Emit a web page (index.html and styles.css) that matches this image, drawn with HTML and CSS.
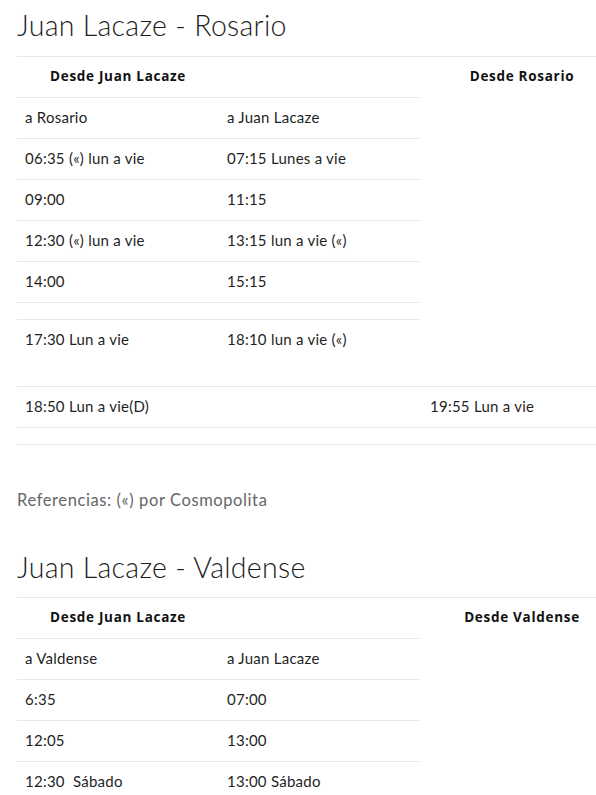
FILE: index.html
```html
<!DOCTYPE html>
<html lang="es">
<head>
<meta charset="utf-8">
<link rel="stylesheet" href="styles.css">
</head>
<body>
<div class="page">
  <h2 class="route-title">Juan Lacaze - Rosario</h2>
  <table class="schedule">
    <colgroup><col class="c1"><col class="c2"><col class="c3"></colgroup>
    <tr class="head">
      <th class="h-from">Desde Juan Lacaze</th>
      <th></th>
      <th class="h-to">Desde Rosario</th>
    </tr>
    <tr class="part"><td>a Rosario</td><td>a Juan Lacaze</td><td class="free"></td></tr>
    <tr class="part"><td>06:35 («) lun a vie</td><td>07:15 Lunes a vie</td><td class="free"></td></tr>
    <tr class="part"><td>09:00</td><td>11:15</td><td class="free"></td></tr>
    <tr class="part"><td>12:30 («) lun a vie</td><td>13:15 lun a vie («)</td><td class="free"></td></tr>
    <tr class="part"><td>14:00</td><td>15:15</td><td class="free"></td></tr>
    <tr class="part empty"><td></td><td></td><td class="free"></td></tr>
    <tr class="part tall"><td>17:30 Lun a vie</td><td>18:10 lun a vie («)</td><td class="free"></td></tr>
    <tr class="full"><td>18:50 Lun a vie(D)</td><td></td><td class="c3-text">19:55 Lun a vie</td></tr>
    <tr class="full empty last"><td></td><td></td><td></td></tr>
  </table>
  <p class="refs">Referencias: («) por Cosmopolita</p>

  <h2 class="route-title second">Juan Lacaze - Valdense</h2>
  <table class="schedule">
    <colgroup><col class="c1"><col class="c2"><col class="c3"></colgroup>
    <tr class="head">
      <th class="h-from">Desde Juan Lacaze</th>
      <th></th>
      <th class="h-to">Desde Valdense</th>
    </tr>
    <tr class="part"><td>a Valdense</td><td>a Juan Lacaze</td><td class="free"></td></tr>
    <tr class="part"><td>6:35</td><td>07:00</td><td class="free"></td></tr>
    <tr class="part"><td>12:05</td><td>13:00</td><td class="free"></td></tr>
    <tr class="part"><td>12:30&nbsp; Sábado</td><td>13:00 Sábado</td><td class="free"></td></tr>
  </table>
</div>
</body>
</html>
```

FILE: styles.css
```css
html, body {
  margin: 0;
  padding: 0;
  background: #fff;
  overflow: hidden;
}
.page {
  padding: 0 0 0 17px;
  font-family: "Lato", "Noto Sans", sans-serif;
  color: #1f1f1f;
}
.route-title {
  margin: 0;
  padding-top: 7px;
  height: 49px;
  font-size: 28.5px;
  line-height: 36px;
  font-weight: 300;
  letter-spacing: 0.3px;
  color: #1c1c1c;
}
.route-title.second {
  padding-top: 3px;
  height: 48px;
}
.schedule {
  width: 579px;
  border-collapse: collapse;
  table-layout: fixed;
  font-size: 15px;
  letter-spacing: 0.25px;
}
.c1 { width: 202px; }
.c2 { width: 201px; }
.c3 { width: 176px; }
.schedule th,
.schedule td {
  padding: 9px 8px 11px;
  line-height: 20px;
  vertical-align: top;
  text-align: left;
  border-top: 1px solid #e8e8e8;
}
.schedule th {
  font-family: "Open Sans", "Lato", sans-serif;
  font-size: 13.5px;
  font-weight: 700;
  letter-spacing: 0.7px;
  color: #111;
}
.schedule th.h-from { text-align: center; }
.schedule th.h-to {
  text-align: center;
  padding: 9px 0 11px 28px;
}
.schedule td.free { border-top: none; }
.schedule tr.empty td {
  padding: 8px 0;
  line-height: 0;
  height: 0;
}
.schedule tr.tall td { height: 46px; }
.schedule td.c3-text { padding-left: 10px; }
.schedule tr.last td { border-bottom: 1px solid #e8e8e8; }
.refs {
  margin: 0;
  padding-top: 45px;
  height: 56px;
  font-size: 16.5px;
  line-height: 20px;
  letter-spacing: 0.6px;
  color: #666;
}
```
